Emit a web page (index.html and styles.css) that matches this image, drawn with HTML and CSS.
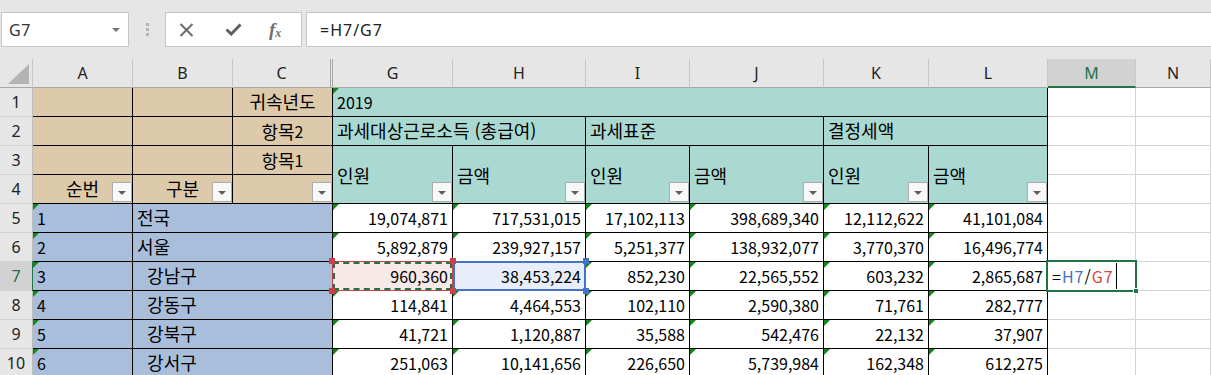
FILE: index.html
```html
<!DOCTYPE html>
<html lang="ko">
<head>
<meta charset="utf-8">
<title>Excel</title>
<link rel="stylesheet" href="styles.css">
</head>
<body>
<div class="topbar">
  <div class="namebox"><span>G7</span><span class="nb-arrow"></span></div>
  <div class="grip"><i></i><i></i><i></i></div>
  <div class="fbtns">
    <svg class="ic-x" width="15" height="14" viewBox="0 0 15 14"><path d="M1.5 1 L13.5 13 M13.5 1 L1.5 13" stroke="#6b6b6b" stroke-width="2" fill="none"/></svg>
    <svg class="ic-ok" width="17" height="13" viewBox="0 0 17 13"><path d="M1.5 6.5 L6.2 11 L15.5 1.5" stroke="#5f5f5f" stroke-width="3" fill="none"/></svg>
    <span class="fx">f<sub>x</sub></span>
  </div>
  <div class="finput">=H7/G7</div>
</div>

<div class="sheet">
  <!-- column headers -->
  <div class="ch corner"></div>
  <div class="ch">A</div>
  <div class="ch">B</div>
  <div class="ch dbl">C</div>
  <div class="ch">G</div>
  <div class="ch">H</div>
  <div class="ch">I</div>
  <div class="ch">J</div>
  <div class="ch">K</div>
  <div class="ch">L</div>
  <div class="ch act">M</div>
  <div class="ch">N</div>

  <!-- row 1 -->
  <div class="rh">1</div>
  <div class="c tan"></div>
  <div class="c tan"></div>
  <div class="c tan ctr k">귀속년도</div>
  <div class="c teal tri span6">2019</div>
  <div class="g"></div>
  <div class="g"></div>

  <!-- row 2 -->
  <div class="rh">2</div>
  <div class="c tan"></div>
  <div class="c tan"></div>
  <div class="c tan ctr"><span class="k">항목</span>2</div>
  <div class="c teal span2 k">과세대상근로소득 (총급여)</div>
  <div class="c teal span2 k">과세표준</div>
  <div class="c teal span2 k">결정세액</div>
  <div class="g"></div>
  <div class="g"></div>

  <!-- row 3 -->
  <div class="rh">3</div>
  <div class="c tan"></div>
  <div class="c tan"></div>
  <div class="c tan ctr"><span class="k">항목</span>1</div>
  <div class="c teal tall k">인원<span class="flt"></span></div>
  <div class="c teal tall k">금액<span class="flt"></span></div>
  <div class="c teal tall k">인원<span class="flt"></span></div>
  <div class="c teal tall k">금액<span class="flt"></span></div>
  <div class="c teal tall k">인원<span class="flt"></span></div>
  <div class="c teal tall k">금액<span class="flt"></span></div>
  <div class="g"></div>
  <div class="g"></div>

  <!-- row 4 -->
  <div class="rh">4</div>
  <div class="c tan ctr k">순번<span class="flt"></span></div>
  <div class="c tan ctr k">구분<span class="flt"></span></div>
  <div class="c tan ctr"><span class="flt"></span></div>
  <div class="g"></div>
  <div class="g"></div>

  <!-- row 5 -->
  <div class="rh">5</div>
  <div class="c blue tri">1</div>
  <div class="c blue span2 k">전국</div>
  <div class="c w tri r">19,074,871</div>
  <div class="c w tri r">717,531,015</div>
  <div class="c w tri r">17,102,113</div>
  <div class="c w tri r">398,689,340</div>
  <div class="c w tri r">12,112,622</div>
  <div class="c w tri r">41,101,084</div>
  <div class="g"></div>
  <div class="g"></div>

  <!-- row 6 -->
  <div class="rh">6</div>
  <div class="c blue tri">2</div>
  <div class="c blue span2 k">서울</div>
  <div class="c w tri r">5,892,879</div>
  <div class="c w tri r">239,927,157</div>
  <div class="c w tri r">5,251,377</div>
  <div class="c w tri r">138,932,077</div>
  <div class="c w tri r">3,770,370</div>
  <div class="c w tri r">16,496,774</div>
  <div class="g"></div>
  <div class="g"></div>

  <!-- row 7 -->
  <div class="rh act">7</div>
  <div class="c blue tri">3</div>
  <div class="c blue span2 k">  강남구</div>
  <div class="c r src">960,360<span class="src-box"></span><span class="hd red tl"></span><span class="hd red tr"></span><span class="hd red bl"></span><span class="hd red br"></span></div>
  <div class="c r ref">38,453,224<span class="ref-box"></span><span class="hd blu tr"></span><span class="hd blu br"></span></div>
  <div class="c w tri r">852,230</div>
  <div class="c w tri r">22,565,552</div>
  <div class="c w tri r">603,232</div>
  <div class="c w tri r">2,865,687</div>
  <div class="g edit">=<span class="fb">H7</span>/<span class="fr">G7</span><span class="caret"></span><span class="act-box"></span><span class="fill-h"></span></div>
  <div class="g"></div>

  <!-- row 8 -->
  <div class="rh">8</div>
  <div class="c blue tri">4</div>
  <div class="c blue span2 k">  강동구</div>
  <div class="c w tri r">114,841</div>
  <div class="c w tri r">4,464,553</div>
  <div class="c w tri r">102,110</div>
  <div class="c w tri r">2,590,380</div>
  <div class="c w tri r">71,761</div>
  <div class="c w tri r">282,777</div>
  <div class="g"></div>
  <div class="g"></div>

  <!-- row 9 -->
  <div class="rh">9</div>
  <div class="c blue tri">5</div>
  <div class="c blue span2 k">  강북구</div>
  <div class="c w tri r">41,721</div>
  <div class="c w tri r">1,120,887</div>
  <div class="c w tri r">35,588</div>
  <div class="c w tri r">542,476</div>
  <div class="c w tri r">22,132</div>
  <div class="c w tri r">37,907</div>
  <div class="g"></div>
  <div class="g"></div>

  <!-- row 10 -->
  <div class="rh">10</div>
  <div class="c blue tri">6</div>
  <div class="c blue span2 k">  강서구</div>
  <div class="c w tri r">251,063</div>
  <div class="c w tri r">10,141,656</div>
  <div class="c w tri r">226,650</div>
  <div class="c w tri r">5,739,984</div>
  <div class="c w tri r">162,348</div>
  <div class="c w tri r">612,275</div>
  <div class="g"></div>
  <div class="g"></div>
</div>
</body>
</html>
```

FILE: styles.css
```css
* { box-sizing: border-box; }
html, body { margin: 0; padding: 0; }
body {
  width: 1211px;
  height: 375px;
  overflow: hidden;
  background: #fff;
  font-family: "Noto Sans CJK KR", "Noto Sans", sans-serif;
  color: #000;
}

/* ---------- formula bar ---------- */
.topbar {
  display: flex;
  align-items: flex-start;
  height: 59px;
  padding-top: 12px;
  background: #e6e6e6;
}
.namebox {
  margin-left: 1px;
  width: 128px;
  height: 35px;
  background: #fff;
  border: 1px solid #c6c6c6;
  display: flex;
  align-items: center;
  justify-content: space-between;
  padding: 0 8px 0 7px;
  font-family: "Noto Sans", sans-serif;
  font-size: 16px;
  letter-spacing: 0.5px;
  color: #333;
}
.nb-arrow {
  width: 0;
  height: 0;
  border-left: 4px solid transparent;
  border-right: 4px solid transparent;
  border-top: 4px solid #777;
}
.grip {
  width: 36px;
  height: 35px;
  display: flex;
  flex-direction: column;
  align-items: center;
  justify-content: center;
  gap: 2px;
}
.grip i { display: block; width: 3px; height: 3px; background: #b5b5b5; }
.fbtns {
  width: 137px;
  height: 35px;
  background: #fff;
  border: 1px solid #c6c6c6;
  display: flex;
  align-items: center;
}
.ic-x { margin-left: 13px; }
.ic-ok { margin-left: 31px; }
.fx {
  margin-left: 27px;
  font-family: "Liberation Serif", serif;
  font-style: italic;
  font-weight: bold;
  font-size: 19px;
  color: #707070;
  line-height: 1;
}
.fx sub { font-size: 12px; vertical-align: -1px; }
.finput {
  margin-left: 4px;
  flex: 1;
  height: 35px;
  background: #fff;
  border: 1px solid #c6c6c6;
  border-right: none;
  padding-left: 13px;
  display: flex;
  align-items: center;
  font-family: "Noto Sans", sans-serif;
  font-size: 16px;
  letter-spacing: 1px;
  color: #222;
}

/* ---------- sheet grid ---------- */
.sheet {
  display: grid;
  grid-template-columns: 33px 100px 100px 100px 120px 133px 104px 134px 105px 119px 88px 1fr;
  grid-auto-rows: 29px;
}
.ch {
  position: relative;
  background: #e6e6e6;
  border-right: 1px solid #c8c8c8;
  border-bottom: 1px solid #a8a8a8;
  display: flex;
  align-items: center;
  justify-content: center;
  font-family: "Noto Sans", sans-serif;
  font-size: 16px;
  color: #222;
}
.ch.dbl { border-right: 3px double #a8a8a8; }
.ch.act {
  background: #d2d2d2;
  color: #217346;
  border-bottom: 2px solid #217346;
}
.corner::before {
  content: "";
  position: absolute;
  right: 3px;
  bottom: 3px;
  border-bottom: 20px solid #b4b4b4;
  border-left: 21px solid transparent;
}
.rh {
  position: relative;
  background: #e6e6e6;
  border-right: 1px solid #bdbdbd;
  border-bottom: 1px solid #cfcfcf;
  display: flex;
  align-items: center;
  justify-content: center;
  font-family: "Noto Sans", sans-serif;
  font-size: 16px;
  color: #222;
}
.rh.act { background: #d2d2d2; color: #217346; }
.rh.act::after {
  content: "";
  position: absolute;
  top: -1px;
  bottom: -1px;
  right: -2px;
  width: 2px;
  background: #217346;
}

.c {
  position: relative;
  border-right: 1px solid #000;
  border-bottom: 1px solid #000;
  display: flex;
  align-items: flex-end;
  padding: 0 4px 2px;
  font-size: 16px;
  line-height: 23px;
  white-space: pre;
}
.k {
  font-size: 18px;
  letter-spacing: 0;
}
.c.k { padding-bottom: 3px; }
.g {
  position: relative;
  border-right: 1px solid #d4d4d4;
  border-bottom: 1px solid #d4d4d4;
}
.tan { background: #ddcaaa; }
.teal { background: #aad9d2; }
.blue { background: #a9bedb; }
.w { background: #fff; }
.ctr { justify-content: center; }
.r { justify-content: flex-end; }
.span2 { grid-column: span 2; }
.span6 { grid-column: span 6; }
.c.tall { grid-row: span 2; align-items: center; padding-bottom: 0; padding-top: 2px; }

.tri::before {
  content: "";
  position: absolute;
  top: 0;
  left: 0;
  border-top: 6px solid #0e8a16;
  border-right: 6px solid transparent;
}

/* filter dropdown buttons */
.flt {
  position: absolute;
  right: 0;
  bottom: 1px;
  width: 20px;
  height: 20px;
  background: #f8f8f8;
  border: 1px solid #acacac;
  display: flex;
  align-items: center;
  justify-content: center;
}
.flt::after {
  content: "";
  border-left: 4px solid transparent;
  border-right: 4px solid transparent;
  border-top: 4px solid #5e5e5e;
  margin-top: 1px;
}

/* formula reference highlights */
.src { background: #f8e9e9; }
.src-box {
  position: absolute;
  inset: -1px;
  border: 1px solid #c9424a;
  z-index: 2;
}
.src-box::after {
  content: "";
  position: absolute;
  inset: 0;
  border: 2px dashed #217346;
}
.ref { background: #e8eef9; }
.ref-box {
  position: absolute;
  top: -1px;
  left: 0;
  right: -1px;
  bottom: -1px;
  border: 2px solid #4472c4;
  z-index: 2;
}
.hd {
  position: absolute;
  width: 6px;
  height: 6px;
  z-index: 3;
}
.hd.red { background: #c9424a; }
.hd.blu { background: #4472c4; }
.hd.tl { left: -4px; top: -4px; }
.hd.tr { right: -4px; top: -4px; }
.hd.bl { left: -4px; bottom: -4px; }
.hd.br { right: -4px; bottom: -4px; }

/* active editing cell */
.edit {
  display: flex;
  align-items: flex-end;
  padding: 0 4px 2px;
  font-size: 16px;
  line-height: 23px;
  letter-spacing: 1px;
}
.fb { color: #4472c4; }
.fr { color: #d9453f; }
.caret {
  display: inline-block;
  width: 1px;
  height: 26px;
  background: #000;
  margin-left: 2px;
  align-self: flex-end;
  margin-bottom: -1px;
}
.act-box {
  position: absolute;
  inset: -2px;
  border: 2px solid #217346;
  z-index: 3;
}
.fill-h {
  position: absolute;
  right: -4px;
  bottom: -4px;
  width: 6px;
  height: 6px;
  background: #217346;
  border: 1px solid #fff;
  z-index: 4;
}
```
